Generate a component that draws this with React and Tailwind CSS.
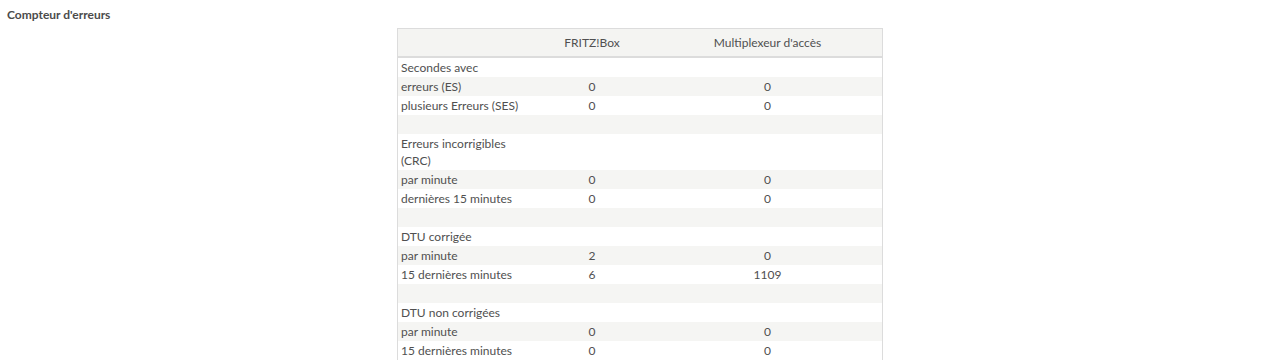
const rows = [
  ["Secondes avec", "", ""],
  ["erreurs (ES)", "0", "0"],
  ["plusieurs Erreurs (SES)", "0", "0"],
  ["", "", ""],
  ["Erreurs incorrigibles (CRC)", "", ""],
  ["par minute", "0", "0"],
  ["dernières 15 minutes", "0", "0"],
  ["", "", ""],
  ["DTU corrigée", "", ""],
  ["par minute", "2", "0"],
  ["15 dernières minutes", "6", "1109"],
  ["", "", ""],
  ["DTU non corrigées", "", ""],
  ["par minute", "0", "0"],
  ["15 dernières minutes", "0", "0"]
];

function App() {
  return (
    <div
      className="min-h-screen bg-white text-[12px] text-[#505050]"
      style={{ fontFamily: "Lato, 'Noto Sans', sans-serif" }}
    >
      <h2 className="h-[28px] pl-[7px] pt-[6px] text-[12px] font-bold leading-[17px] text-[#4b4b4b]">
        Compteur d'erreurs
      </h2>

      <div className="flex justify-center">
        <div className="w-[486px] border-x border-t border-[#dcdcdc]">
          <div className="grid h-[29px] grid-cols-[133px_122px_1fr] items-center border-b-2 border-[#dcdcdc] bg-[#f4f4f2]">
            <span></span>
            <span className="text-center">FRITZ!Box</span>
            <span className="text-center">Multiplexeur d'accès</span>
          </div>

          {rows.map((row, i) => (
            <div
              key={i}
              className={
                "grid grid-cols-[133px_122px_1fr] py-[1px] leading-[17px] " +
                (i % 2 === 1 ? "bg-[#f5f5f3]" : "bg-white")
              }
            >
              <span className="min-h-[17px] pl-[3px] pr-2">{row[0]}</span>
              <span className="text-center">{row[1]}</span>
              <span className="text-center">{row[2]}</span>
            </div>
          ))}
        </div>
      </div>
    </div>
  );
}

export default App;
